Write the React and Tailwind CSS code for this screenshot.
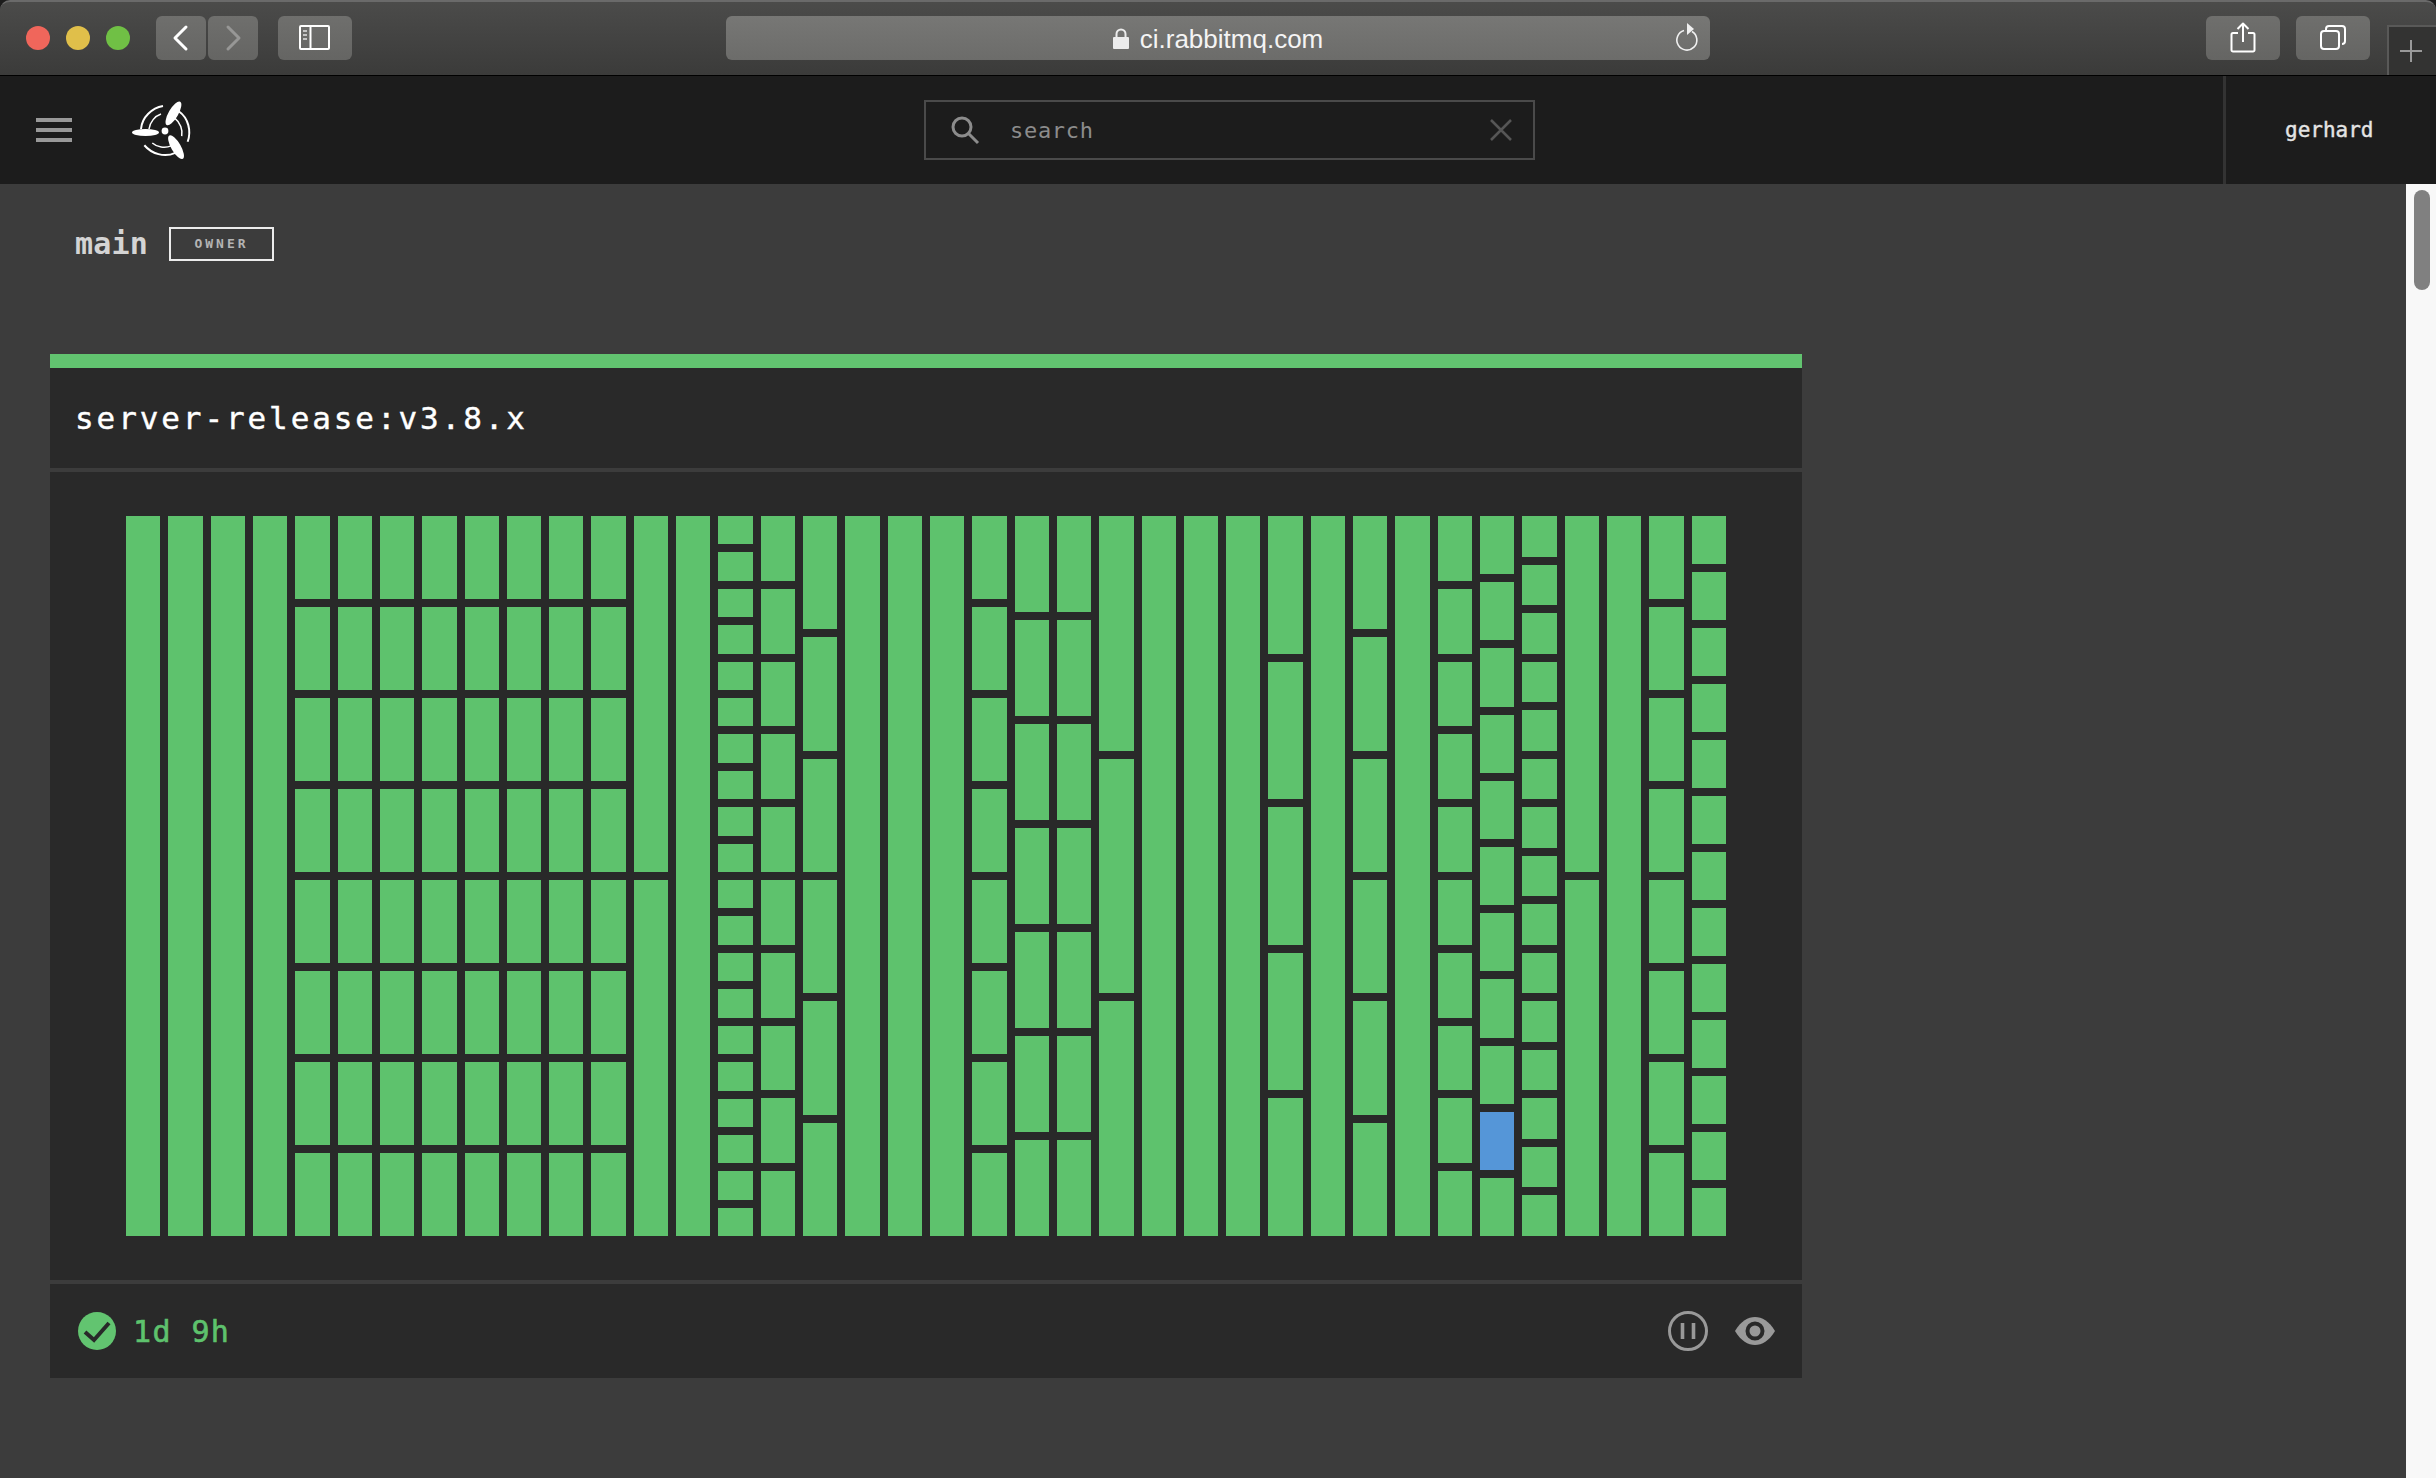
const columns = [1, 1, 1, 1, 8, 8, 8, 8, 8, 8, 8, 8, 2, 1, 20, 10, 6, 1, 1, 1, 8, 7, 7, 3, 1, 1, 1, 5, 1, 6, 1, 10, 11, 15, 2, 1, 8, 13];

const ToolbarButton = ({ className, children }) => (
  <div className={`h-11 rounded-[6px] bg-gradient-to-b from-[#6f6f6d] to-[#656563] flex items-center justify-center ${className}`}>
    {children}
  </div>
);

const Blade = ({ angle, ry }) => (
  <g transform={`rotate(${angle} 35 33)`}>
    <ellipse cx="15.5" cy="34.5" rx="13.5" ry={ry} fill="#fff" />
    <path d="M11 31 C12 19 22 10 33 8" fill="none" stroke="#fff" strokeWidth="2" />
    <path d="M19 31 C20 24 25 18 31 16" fill="none" stroke="#fff" strokeWidth="1.5" />
  </g>
);

const Logo = () => (
  <svg width="64" height="64" viewBox="0 0 64 64">
    <Blade angle={0} ry={3.4} />
    <Blade angle={120} ry={4.8} />
    <Blade angle={240} ry={4.8} />
    <circle cx="35" cy="33" r="3.4" fill="#fff" />
  </svg>
);

const TitleBar = () => (
  <div className="h-[75px] shrink-0 bg-[#1c1c1c]">
    <div className="relative h-full rounded-t-[10px] border-t-2 border-[#6a6a6a] bg-gradient-to-b from-[#4b4b4a] to-[#3b3b3a] flex items-center pl-[26px] pb-[1px]">
      <span className="w-6 h-6 rounded-full bg-[#f0665b]" />
      <span className="w-6 h-6 rounded-full bg-[#e0bf4a] ml-4" />
      <span className="w-6 h-6 rounded-full bg-[#70c045] ml-4" />
      <ToolbarButton className="w-[50px] ml-[26px]">
        <svg width="20" height="28" viewBox="0 0 20 28" fill="none" stroke="#fff" strokeWidth="3" strokeLinecap="round" strokeLinejoin="round">
          <path d="M15 3 L4 14 L15 25" />
        </svg>
      </ToolbarButton>
      <ToolbarButton className="w-[50px] ml-[2px]">
        <svg width="20" height="28" viewBox="0 0 20 28" fill="none" stroke="#979796" strokeWidth="3" strokeLinecap="round" strokeLinejoin="round">
          <path d="M5 3 L16 14 L5 25" />
        </svg>
      </ToolbarButton>
      <ToolbarButton className="w-[74px] ml-5">
        <svg width="32" height="26" viewBox="0 0 32 26" fill="none" stroke="#fff" strokeWidth="2">
          <rect x="1" y="1" width="29" height="23" rx="1" />
          <path d="M11.5 1 V24" />
          <path d="M4 6 H8 M4 10 H8 M4 14 H8" stroke="#c4c4c4" />
        </svg>
      </ToolbarButton>
      <div className="relative w-[984px] h-11 ml-[374px] rounded-[6px] bg-gradient-to-b from-[#777775] to-[#6c6c6a] flex items-center justify-center gap-[11px] text-[26px] text-[#f4f4f4] font-['Liberation_Sans',sans-serif]">
        <svg width="16" height="22" viewBox="0 0 16 22" className="mt-[1px]">
          <path d="M3.5 9 V6 a4.5 4.5 0 0 1 9 0 V9" fill="none" stroke="#ececec" strokeWidth="2" />
          <rect x="0" y="9" width="16" height="12" rx="1" fill="#ececec" />
        </svg>
        <span className="mt-[2px]">ci.rabbitmq.com</span>
        <svg width="26" height="30" viewBox="0 0 26 30" fill="none" className="absolute right-[10px] top-[7px]">
          <path d="M18 8.5 A10 10 0 1 1 10 7.5" stroke="#f0f0f0" strokeWidth="1.6" />
          <path d="M13 0 L20 6 L13 12 Z" fill="#f0f0f0" />
        </svg>
      </div>
      <ToolbarButton className="w-[74px] ml-[496px]">
        <svg width="26" height="32" viewBox="0 0 26 32" fill="none" stroke="#fff" strokeWidth="2" strokeLinejoin="round">
          <path d="M8 11 H3 a1.5 1.5 0 0 0 -1.5 1.5 V28 a1.5 1.5 0 0 0 1.5 1.5 H23 a1.5 1.5 0 0 0 1.5 -1.5 V12.5 A1.5 1.5 0 0 0 23 11 H18" />
          <path d="M13 20 V2 M7.5 7 L13 1.5 L18.5 7" />
        </svg>
      </ToolbarButton>
      <ToolbarButton className="w-[74px] ml-4">
        <svg width="26" height="26" viewBox="0 0 26 26" fill="none" stroke="#fff" strokeWidth="2">
          <rect x="1" y="6" width="18" height="18" rx="3" />
          <path d="M6 5 V4 a3 3 0 0 1 3 -3 H22 a3 3 0 0 1 3 3 V16 a3 3 0 0 1 -3 3" />
        </svg>
      </ToolbarButton>
      <div className="absolute right-0 bottom-0 w-[49px] h-[50px] border-l-2 border-t-2 border-[#595958] bg-[#333332] flex items-center justify-center">
        <svg width="24" height="24" viewBox="0 0 24 24" stroke="#9a9a9a" strokeWidth="2" className="-ml-[3px]">
          <path d="M12 1 V23 M1 12 H23" />
        </svg>
      </div>
    </div>
  </div>
);

const Header = () => (
  <div className="h-[109px] shrink-0 border-t border-black bg-[#1c1c1c] flex items-center font-['DejaVu_Sans_Mono',monospace]">
    <div className="w-9 ml-9 flex flex-col gap-[6px]">
      <span className="h-1 bg-[#999]" />
      <span className="h-1 bg-[#999]" />
      <span className="h-1 bg-[#999]" />
    </div>
    <div className="ml-[58px]">
      <Logo />
    </div>
    <div className="w-[611px] h-[60px] ml-[730px] border-2 border-[#4a4a4a] flex items-center pl-[24px] pr-[21px] text-[#8c8c8c]">
      <svg width="30" height="30" viewBox="0 0 30 30" fill="none" stroke="#8c8c8c" strokeWidth="3">
        <circle cx="12" cy="12" r="9" />
        <path d="M18.5 18.5 L28 28" />
      </svg>
      <span className="ml-[30px] text-[22px] tracking-[0.7px]">search</span>
      <svg width="22" height="22" viewBox="0 0 22 22" stroke="#565656" strokeWidth="2.5" className="ml-auto">
        <path d="M1 1 L21 21 M21 1 L1 21" />
      </svg>
    </div>
    <div className="ml-auto w-[213px] h-full border-l-[3px] border-[#333] flex items-center pl-[59px] pt-[2px] text-[21px] text-[#e4e4e4] [-webkit-text-stroke:0.4px_#e4e4e4]">
      gerhard
    </div>
  </div>
);

const Column = ({ rows, index }) => (
  <div className="flex-1 flex flex-col gap-2">
    {Array.from({ length: rows }, (_, i) => (
      <div key={i} className={index === 32 && i === 9 ? 'flex-1 bg-[#5596d8]' : 'flex-1 bg-[#5ec26d]'} />
    ))}
  </div>
);

const Card = () => (
  <div className="w-[1752px] ml-[50px] mt-[93px] bg-[#292929] font-['DejaVu_Sans_Mono',monospace]">
    <div className="h-[14px] bg-[#62c470]" />
    <div className="h-[100px] flex items-center pl-[25px] text-[31px] tracking-[2.9px] text-white [-webkit-text-stroke:0.4px_#fff]">
      server-release:v3.8.x
    </div>
    <div className="h-1 bg-[#3c3c3c]" />
    <div className="h-[808px] px-[76px] py-[44px]">
      <div className="h-[720px] flex gap-2">
        {columns.map((rows, i) => (
          <Column key={i} rows={rows} index={i} />
        ))}
      </div>
    </div>
    <div className="h-1 bg-[#3c3c3c]" />
    <div className="h-[94px] flex items-center pl-[28px] pr-[27px]">
      <svg width="38" height="38" viewBox="0 0 38 38">
        <circle cx="19" cy="19" r="19" fill="#62c470" />
        <path d="M7 20 L16 28 L31 11" fill="none" stroke="#292929" strokeWidth="4" />
      </svg>
      <span className="ml-[17px] text-[30px] tracking-[1.4px] text-[#5ec26d] whitespace-pre [-webkit-text-stroke:0.6px_#5ec26d]">1d 9h</span>
      <div className="ml-auto flex items-center gap-[27px] -mt-[1px]">
        <svg width="40" height="40" viewBox="0 0 40 40" fill="none" stroke="#999">
          <circle cx="20" cy="20" r="18.5" strokeWidth="3" />
          <path d="M14.5 12 V28 M25.5 12 V28" strokeWidth="3.6" />
        </svg>
        <svg width="40" height="28" viewBox="0 0 40 28">
          <path d="M0 14 C6 4 13 0 20 0 C27 0 34 4 40 14 C34 24 27 28 20 28 C13 28 6 24 0 14 Z" fill="#999" />
          <circle cx="20" cy="14" r="7.5" fill="#999" stroke="#292929" strokeWidth="4" />
        </svg>
      </div>
    </div>
  </div>
);

const App = () => {
  return (
    <div className="w-[2436px] h-[1478px] overflow-hidden flex flex-col bg-[#3c3c3c]">
      <TitleBar />
      <Header />
      <div className="flex-1 flex min-h-0">
        <div className="flex-1">
          <div className="pt-[43px] pl-[75px] flex items-center font-['DejaVu_Sans_Mono',monospace]">
            <span className="w-[73px] text-[30px] tracking-[0.2px] font-bold text-[#d4d4d4] leading-[34px]">main</span>
            <span className="ml-[21px] w-[105px] h-[34px] border-2 border-[#ececec] flex items-center justify-center text-[13px] tracking-[3px] font-bold text-[#b4b4b4]">
              OWNER
            </span>
          </div>
          <Card />
        </div>
        <div className="w-[30px] bg-[#f8f8f8] pt-[6px] pl-2">
          <div className="w-4 h-[100px] rounded-full bg-[#808080]" />
        </div>
      </div>
    </div>
  );
};

export default App;
